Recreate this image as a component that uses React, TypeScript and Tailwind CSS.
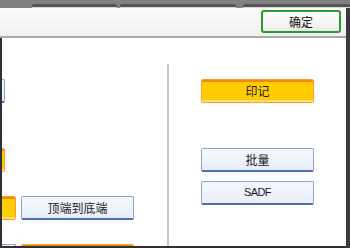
import React from "react";

const font = { fontFamily: '"Noto Sans CJK SC", "Noto Sans", sans-serif' };

function BlueBtn({ children, className = "" }: { children?: React.ReactNode; className?: string }) {
  return (
    <div
      className={`h-[24px] w-[113px] shrink-0 rounded-[2px] border border-[#8aa4d8] border-b-2 border-b-[#4e6db0] bg-[linear-gradient(to_bottom,#f6f8fe,#e9eefb)] flex items-center justify-center text-[12px] leading-none text-[#1a1a1a] ${className}`}
    >
      {children}
    </div>
  );
}

function OrangeBtn({ children, className = "" }: { children?: React.ReactNode; className?: string }) {
  return (
    <div
      className={`h-[24px] w-[113px] shrink-0 rounded-[2px] border border-[#ff9a3a] flex flex-col overflow-hidden ${className}`}
    >
      <div className="h-[2px] bg-[#f08a10]" />
      <div className="flex-1 bg-[#ffcc00] flex items-center justify-center text-[12px] leading-none text-[#1a1a1a]">
        {children}
      </div>
      <div className="h-[2px] bg-[#ffe070]" />
    </div>
  );
}

export default function App() {
  return (
    <div className="w-[350px] h-[248px] overflow-hidden bg-white flex flex-col" style={font}>
      {/* top tab strip */}
      <div className="h-[8px] bg-[#808080] flex items-end shrink-0">
        <div className="ml-[32px] w-[85px] h-[4px] rounded-t-[2px] bg-[#555555] border-b border-[#d8d8d8]" />
        <div className="ml-[3px] w-[116px] h-[4px] rounded-t-[2px] bg-[#555555] border-b border-[#d8d8d8]" />
        <div className="ml-[7px] flex-1 h-[4px] rounded-t-[2px] bg-[#555555] border-b border-[#d8d8d8]" />
      </div>
      <div className="flex-1 flex min-h-0">
        <div className="flex-1 flex flex-col min-w-0">
          {/* header */}
          <div className="h-[30px] shrink-0 bg-[linear-gradient(to_bottom,#fbfbfb,#f1f1f1)] border-b-2 border-[#a9a9a9] flex justify-end items-start pt-[2px] pr-[5px]">
            <div className="w-[80px] h-[23px] rounded-[3px] border-2 border-[#2e9a2e] bg-[linear-gradient(to_bottom,#ffffff,#ececec)] flex items-center justify-center text-[12px] leading-none text-[#111]">
              确定
            </div>
          </div>
          {/* body */}
          <div className="flex-1 flex min-h-0 border-l-2 border-[#303030] border-b-2 border-b-[#303030]">
            {/* left column */}
            <div className="w-[165px] shrink-0 overflow-hidden flex flex-col items-start">
              <BlueBtn className="mt-[41px] ml-[-110px]" />
              <OrangeBtn className="mt-[45px] ml-[-110px]" />
              <div className="mt-[24px] flex gap-[5px] ml-[-99px]">
                <OrangeBtn />
                <BlueBtn>顶端到底端</BlueBtn>
              </div>
              <div className="mt-[24px] flex gap-[5px] ml-[-99px]">
                <BlueBtn />
                <OrangeBtn />
              </div>
            </div>
            {/* separator */}
            <div className="w-[2px] mt-[26px] bg-[#c8c8c8] shrink-0" />
            {/* right column */}
            <div className="flex-1 flex flex-col items-start pl-[32px]">
              <OrangeBtn className="mt-[41px]">印记</OrangeBtn>
              <BlueBtn className="mt-[45px]">批量</BlueBtn>
              <BlueBtn className="mt-[9px]">
                <span className="text-[11px] tracking-[-0.6px]" style={{ fontFamily: '"Liberation Sans", sans-serif' }}>
                  SADF
                </span>
              </BlueBtn>
            </div>
          </div>
        </div>
        <div className="w-[4px] shrink-0 bg-[#3a3a3a]" />
      </div>
    </div>
  );
}
